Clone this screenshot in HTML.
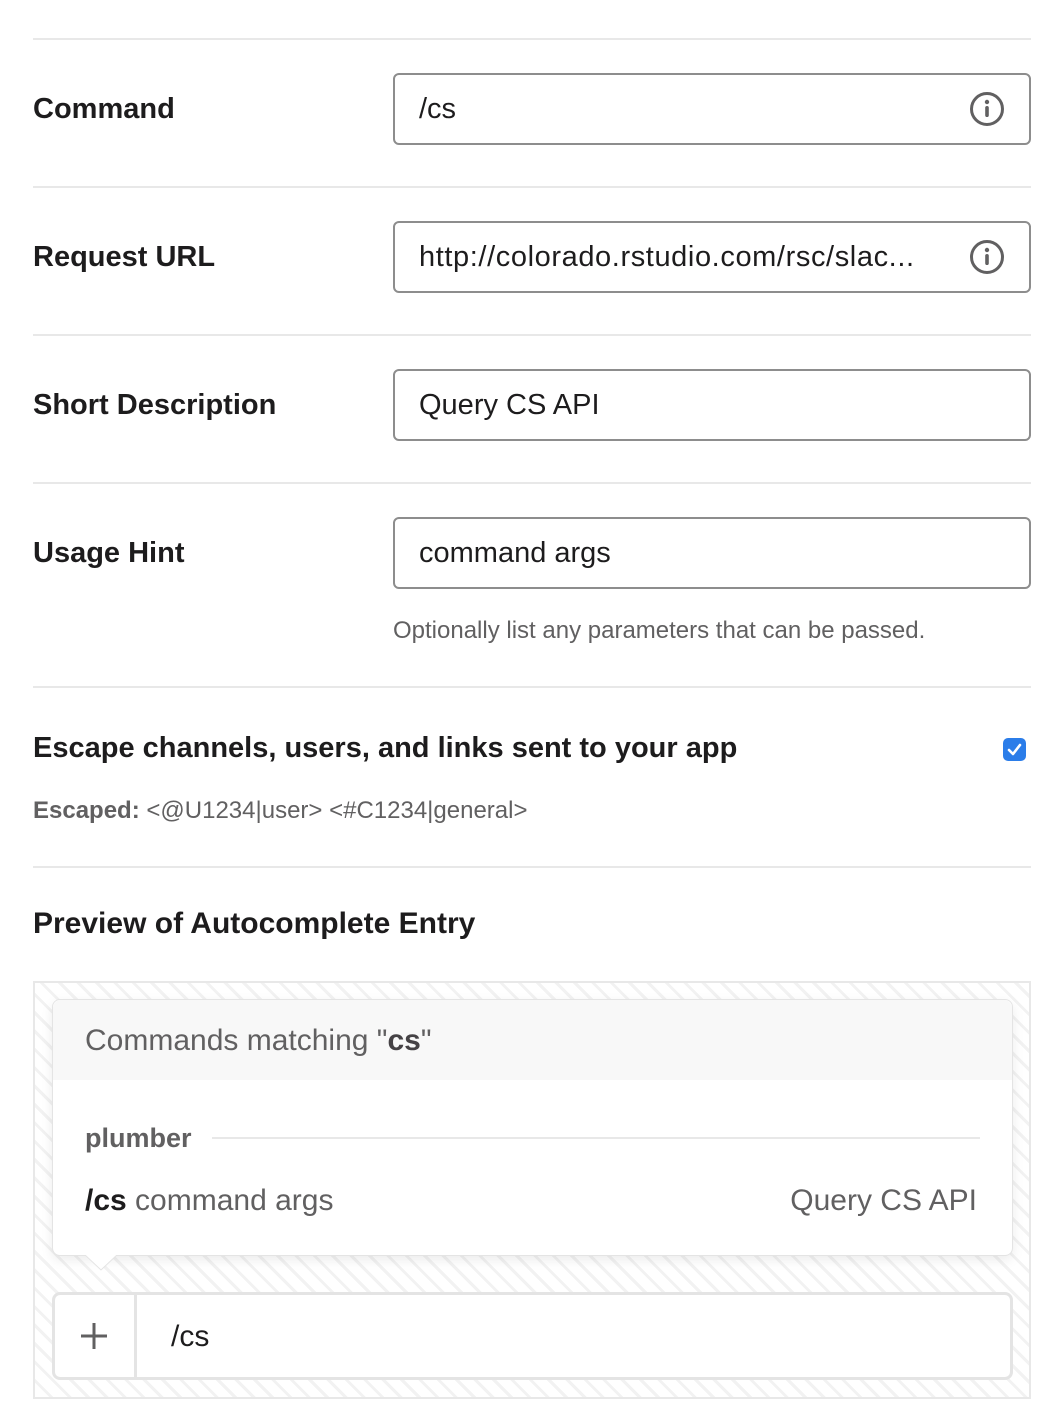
<!DOCTYPE html>
<html><head><meta charset="utf-8"><style>
*{box-sizing:border-box;margin:0;padding:0}
body{width:1060px;height:1426px;background:#fff;font-family:"Liberation Sans",sans-serif;color:#1d1c1d;position:relative;overflow:hidden}
.a{position:absolute;white-space:nowrap}
.hr{position:absolute;left:33px;width:998px;height:2px;background:#e8e8e8}
.lbl{position:absolute;left:33px;font-weight:bold;font-size:29px;line-height:36px}
.inp{position:absolute;left:393px;width:638px;height:72px;border:2px solid #8d8d8d;border-radius:6px;font-size:29px;line-height:68px;padding-left:24px;color:#1d1c1d;white-space:nowrap}
.info{position:absolute;right:24px;top:16px}
</style></head><body>
<div class="hr" style="top:38px"></div>
<div class="lbl" style="top:91px">Command</div>
<div class="inp" style="top:73px">/cs<svg class="info" width="36" height="36" viewBox="0 0 36 36"><circle cx="18" cy="18" r="15.5" fill="none" stroke="#616061" stroke-width="3"/><circle cx="18" cy="11" r="2.2" fill="#616061"/><rect x="16.2" y="15" width="3.6" height="11" rx="1.8" fill="#616061"/></svg></div>
<div class="hr" style="top:186px"></div>
<div class="lbl" style="top:239px">Request URL</div>
<div class="inp" style="top:221px"><span style="letter-spacing:0.6px">http://colorado.rstudio.com/rsc/slac...</span><svg class="info" width="36" height="36" viewBox="0 0 36 36"><circle cx="18" cy="18" r="15.5" fill="none" stroke="#616061" stroke-width="3"/><circle cx="18" cy="11" r="2.2" fill="#616061"/><rect x="16.2" y="15" width="3.6" height="11" rx="1.8" fill="#616061"/></svg></div>
<div class="hr" style="top:334px"></div>
<div class="lbl" style="top:387px">Short Description</div>
<div class="inp" style="top:369px">Query CS API</div>
<div class="hr" style="top:482px"></div>
<div class="lbl" style="top:535px">Usage Hint</div>
<div class="inp" style="top:517px">command args</div>
<div class="a" style="left:393px;top:617px;font-size:24px;line-height:28px;color:#616061">Optionally list any parameters that can be passed.</div>
<div class="hr" style="top:686px"></div>
<div class="lbl" style="top:730px">Escape channels, users, and links sent to your app</div>
<div class="a" style="left:1003px;top:738px;width:23px;height:23px;background:#2b7de9;border-radius:5px"><svg width="23" height="23" viewBox="0 0 23 23"><path d="M6 12 L10 16 L17 7" fill="none" stroke="#fff" stroke-width="2.6" stroke-linecap="round" stroke-linejoin="round"/></svg></div>
<div class="a" style="left:33px;top:797px;font-size:24px;line-height:28px;color:#616061"><b>Escaped:</b> &lt;@U1234|user&gt; &lt;#C1234|general&gt;</div>
<div class="hr" style="top:866px"></div>
<div class="lbl" style="top:906px;font-size:30px">Preview of Autocomplete Entry</div>
<div class="a" style="left:33px;top:981px;width:998px;height:418px;border:2px solid #e8e8e8;background:repeating-linear-gradient(45deg,#fff 0 10px,#f2f2f2 10px 13px)"></div>
<div class="a" style="left:52px;top:999px;width:961px;height:257px;background:#fff;border:1px solid #e4e4e4;border-radius:8px;box-shadow:0 4px 12px rgba(0,0,0,.08)"></div>
<div class="a" style="left:53px;top:1000px;width:959px;height:80px;background:#f8f8f8;border-radius:8px 8px 0 0"></div>
<svg class="a" style="left:84px;top:1254px" width="34" height="18" viewBox="0 0 34 18"><path d="M0 0 L17 16 L34 0" fill="#fff" stroke="#e4e4e4" stroke-width="1"/><rect x="0" y="-2" width="34" height="3" fill="#fff"/></svg>
<div class="a" style="left:85px;top:1023px;font-size:30px;line-height:36px;color:#616061">Commands matching "<b style="color:#454245">cs</b>"</div>
<div class="a" style="left:85px;top:1122px;font-size:27px;line-height:32px;color:#616061;font-weight:bold">plumber</div>
<div class="a" style="left:212px;top:1137px;width:768px;height:2px;background:#e8e8e8"></div>
<div class="a" style="left:85px;top:1183px;font-size:30px;line-height:36px;color:#616061"><b style="color:#1d1c1d">/cs</b> command args</div>
<div class="a" style="right:83px;top:1183px;font-size:30px;line-height:36px;color:#616061">Query CS API</div>
<div class="a" style="left:52px;top:1292px;width:961px;height:88px;background:#fff;border:3px solid #e4e4e4;border-radius:8px"></div>
<div class="a" style="left:134px;top:1295px;width:3px;height:82px;background:#e4e4e4"></div>
<svg class="a" style="left:80px;top:1322px" width="28" height="28" viewBox="0 0 28 28"><path d="M14 1V27M1 14H27" stroke="#616061" stroke-width="3"/></svg>
<div class="a" style="left:171px;top:1319px;font-size:30px;line-height:36px;color:#1d1c1d">/cs</div>
</body></html>
